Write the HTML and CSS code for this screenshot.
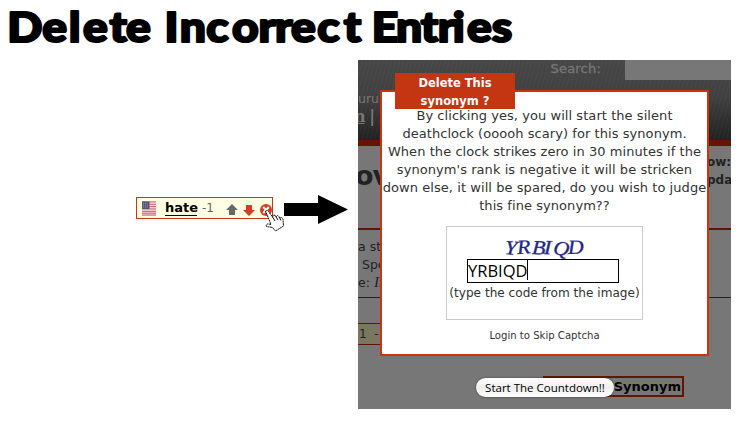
FILE: index.html
```html
<!DOCTYPE html>
<html lang="en">
<head>
<meta charset="utf-8">
<title>Delete Incorrect Entries</title>
<link rel="stylesheet" href="styles.css">
</head>
<body>
<h1 class="heading">
<svg width="520" height="60" aria-label="Delete Incorrect Entries">
<g transform="scale(1.1 1)">
<text y="42" x="6.5 38.5 62.5 75.5 99.5 114.5">Delete</text>
<text y="42" x="149.5 163.5 187.5 211 235 250 264.5 288.5 312.5">Incorrect</text>
<text y="42" x="338 360 382.500 398 411.500 424.5 447">Entries</text>
</g>
</svg>
</h1>
<main class="main">
<section class="before">
<div class="entry">
<svg class="flag" width="15" height="15" viewBox="0 0 15 15"><path fill="#f3e6e2" d="M0 0h15v15H0z"/><path stroke="#d04b4d" d="M0 .5h15M0 3h15M0 5.5h15M0 8h15M0 10.5h15M0 12.5h15M0 14.5h15"/><path fill="#505477" d="M0 0h8v8H0z"/><path stroke="#a6a9bd" stroke-dasharray="1 1" d="M1 2h6M1 4h6M1 6h6"/></svg>
<b class="word">hate</b><span class="rank">-1</span>
<svg class="tool up" width="12" height="12" viewBox="0 0 12 12"><path fill="#666" d="M6 0l6 6H9v5H3V6H0z"/></svg>
<svg class="tool down" width="12" height="12" viewBox="0 0 12 12"><path fill="#d63c20" d="M6 12L0 6h3V1h6v5h3z"/></svg>
<svg class="tool close" width="12" height="12" viewBox="0 0 12 12"><circle cx="6" cy="6" r="6" fill="#d63c20"/><path stroke="#fff" stroke-width="2" d="M3.2 3l5.6 6M8.8 3L3.2 9"/></svg>
<svg class="hand" width="21" height="23" viewBox="0 0 21 23"><path fill="#fff" stroke="#111" stroke-dasharray="2 .5" d="M1.5 2C2.500 .8 4 1.500 4.500 2.500L8.500 8l1-2 2 .5.5 1.500 1.500-1.500 1.500 1 .5 1.500 2-.5 1.500 1.500.5 7-8 5-3-3.500-6-1c-.8-1.500.5-2.800 2-2.500l2.500.5z"/><path stroke="#111" fill="none" d="M8.500 8l2.500 4M12 8l2 3M15.500 8.500l1.500 3"/></svg>
</div>
<svg class="arrow" width="64" height="30" viewBox="0 0 64 30"><path d="M0 8h34V0l30 14.5L34 29v-8H0z"/></svg>
</section>
<section class="scene">
<div class="site">
<header class="masthead">
<div class="search"><span>Search:</span><i class="field"></i></div>
<div class="guru">uru</div>
<div class="nav"><u>n</u> |</div>
</header>
<div class="title"><span class="big">ov</span><span class="side">ow:<br>pda</span></div>
<div class="definition">a st<br>&nbsp;Spe<br>e: <i>In</i></div>
<div class="chip">1&nbsp; -</div>
<div class="add">Synonym</div>
</div>
<div class="modal">
<div class="modal-title">Delete This<br>synonym ?</div>
<p class="message"><span>By clicking yes, you will start the silent</span><span>deathclock (ooooh scary) for this synonym.</span><span>When the clock strikes zero in 30 minutes if the</span><span>synonym's rank is negative it will be stricken</span><span>down else, it will be spared, do you wish to judge</span><span>this fine synonym??</span></p>
<div class="captcha">
<svg class="code" width="90" height="26"><g transform="scale(1.1 1)"><text y="21" x="2 14 27 38 46 60" rotate="5 -4 3 2 8 -2">YRBIQD</text></g></svg>
<div class="input"><span>YRBIQD</span></div>
<div class="hint">(type the code from the image)</div>
</div>
<div class="login">Login to Skip Captcha</div>
</div>
<button class="start">Start The Countdown!!</button>
</section>
</main>
</body>
</html>
```
FILE: styles.css
```css
* { box-sizing: border-box; }
body { margin: 0; width: 744px; height: 427px; overflow: hidden; background: #fff; font: 13px/18px "DejaVu Sans", sans-serif; color: #333; }
.heading { margin: 0; height: 60px; }
.heading svg { display: block; }
.heading text { font: 900 42px Lato, sans-serif; fill: #000; stroke: #000; stroke-width: 2.2px; stroke-linejoin: round; }
.main { display: flex; height: 349px; }
.before { width: 358px; display: flex; align-items: flex-start; padding: 135px 0 0 136px; }
.entry { position: relative; display: flex; align-items: center; width: 137px; height: 22px; margin-top: 2px; border: 1px solid #cb3412; background: #fffde2; padding-left: 5px; white-space: nowrap; }
.word { flex: none; width: 32px; margin-left: 9px; color: #000; font-size: 13px; line-height: 15px; border-bottom: 1px solid #000; }
.rank { margin-left: 5px; font-size: 12px; color: #666; }
.tool { flex: none; margin-top: 3px; }
.up { margin-left: 12px; }
.down { margin-left: 5px; }
.close { margin-left: 5px; }
.hand { position: absolute; left: 127px; top: 11px; }
.arrow { margin-left: 11px; }
.scene { position: relative; width: 373px; height: 349px; overflow: hidden; background: #777; }
.masthead { height: 86px; border-bottom: 6px solid #651400; background: repeating-linear-gradient(105deg, #ffffff06 0 1px, transparent 1px 4px), linear-gradient(#474747, #414141 45%, #222); color: #777; }
.search { display: flex; justify-content: flex-end; height: 20px; font-size: 13px; }
.search span { margin-right: 24px; letter-spacing: .2px; -webkit-text-stroke: .3px #777; }
.field { width: 106px; height: 20px; background: #777; }
.guru { margin-top: 10px; font-size: 12.5px; line-height: 18px; }
.nav { font: bold 16px/18px "DejaVu Serif", serif; letter-spacing: -1px; margin-left: -4px; }
.title { display: flex; justify-content: space-between; height: 84px; border-bottom: 2px solid #651400; color: #222; }
.big { width: 22px; overflow: hidden; font-weight: bold; font-size: 27px; line-height: 59px; letter-spacing: -1px; text-indent: -3px; }
.side { width: 24px; padding-top: 7px; font-weight: bold; font-size: 12px; }
.definition { height: 68px; padding-top: 8px; border-bottom: 1px solid #222; line-height: 18px; font-size: 12.5px; color: #222; }
.definition i { font-family: "Liberation Serif", serif; font-size: 15px; line-height: 1; }
.chip { width: 30px; height: 22px; margin-top: 25px; padding-left: 1px; line-height: 20px; font-size: 12px; border: solid #651400; border-width: 1px 0; background: #78775f; color: #222; }
.add { width: 141px; height: 21px; margin: 31px 0 0 185px; padding-right: 1px; border: 2px solid #651400; font-weight: bold; font-size: 13px; line-height: 18px; text-align: right; color: #000; white-space: nowrap; }
.modal { position: absolute; left: 22px; top: 30px; width: 329px; height: 266px; border: 2px solid #c93411; background: #fff; }
.modal-title { position: absolute; left: 13px; top: -19px; width: 120px; height: 36px; padding-top: 1px; background: #c43512; color: #fff; font-weight: bold; font-size: 11.5px; line-height: 18px; text-align: center; }
.message { display: flex; flex-direction: column; align-items: center; margin: 15px 0 0; font-size: 13px; line-height: 18px; letter-spacing: .06px; white-space: nowrap; }
.captcha { display: flex; flex-direction: column; align-items: center; width: 197px; height: 94px; margin: 11px auto 0 64px; padding-top: 6px; border: 1px solid #ccc; white-space: nowrap; }
.code { margin-left: 5px; flex: none; overflow: visible; }
.code g { font: italic 20px "Liberation Serif", serif; fill: #232787; stroke: #232787; stroke-width: .3px; }
.input { flex: none; width: 152px; height: 24px; margin-right: 3px; border: 1px solid #000; background: #fff; color: #000; font: 16.5px/22px "Open Sans", sans-serif; }
.input span { display: inline-block; height: 20px; border-right: 1px solid #000; line-height: 22px; }
.hint { margin-top: 1px; font-size: 12.1px; line-height: 19px; }
.login { margin-top: 8px; font-size: 10.1px; line-height: 16px; text-align: center; }
.start { position: absolute; left: 118px; top: 318px; width: 138px; height: 19px; padding: 0; border: 0; border-radius: 10px; background: linear-gradient(#fff, #eee 50%, #fff); box-shadow: 0 0 2px #333; font: 11.5px/18px "Open Sans", sans-serif; color: #000; white-space: nowrap; }
```
